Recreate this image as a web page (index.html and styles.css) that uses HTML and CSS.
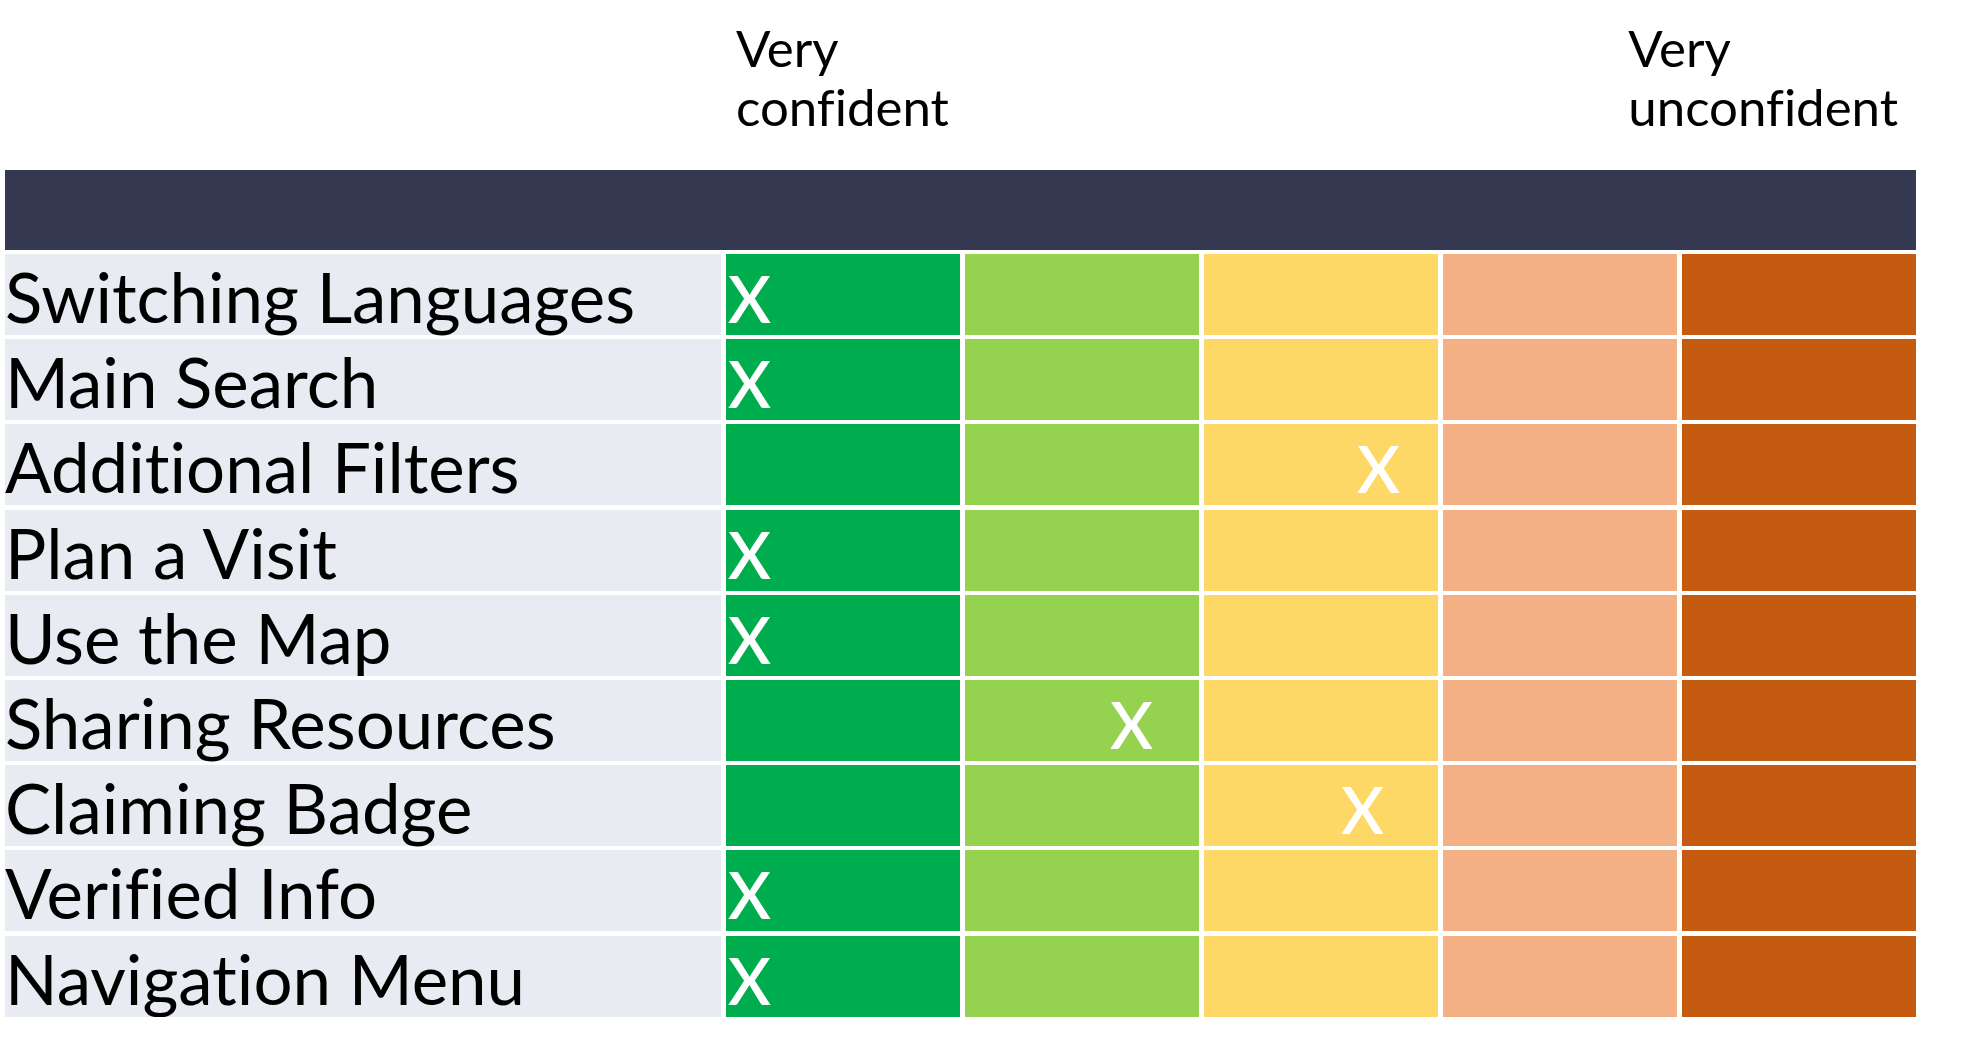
FILE: index.html
```html
<!DOCTYPE html>
<html lang="en">
<head>
<meta charset="utf-8">
<title>Confidence ratings</title>
<link rel="stylesheet" href="styles.css">
</head>
<body>
<div class="page">
  <div class="head">
    <div class="scale-label scale-start">Very<br>confident</div>
    <div class="scale-label scale-end">Very<br>unconfident</div>
  </div>
  <div class="bar"></div>
  <div class="grid">
    <div class="label">Switching Languages</div>
    <div class="cell c1"><span class="mark">X</span></div><div class="cell c2"></div><div class="cell c3"></div><div class="cell c4"></div><div class="cell c5"></div>

    <div class="label">Main Search</div>
    <div class="cell c1"><span class="mark">X</span></div><div class="cell c2"></div><div class="cell c3"></div><div class="cell c4"></div><div class="cell c5"></div>

    <div class="label">Additional Filters</div>
    <div class="cell c1"></div><div class="cell c2"></div><div class="cell c3"><span class="mark off-153">X</span></div><div class="cell c4"></div><div class="cell c5"></div>

    <div class="label">Plan a Visit</div>
    <div class="cell c1"><span class="mark">X</span></div><div class="cell c2"></div><div class="cell c3"></div><div class="cell c4"></div><div class="cell c5"></div>

    <div class="label">Use the Map</div>
    <div class="cell c1"><span class="mark">X</span></div><div class="cell c2"></div><div class="cell c3"></div><div class="cell c4"></div><div class="cell c5"></div>

    <div class="label">Sharing Resources</div>
    <div class="cell c1"></div><div class="cell c2"><span class="mark off-145">X</span></div><div class="cell c3"></div><div class="cell c4"></div><div class="cell c5"></div>

    <div class="label">Claiming Badge</div>
    <div class="cell c1"></div><div class="cell c2"></div><div class="cell c3"><span class="mark off-137">X</span></div><div class="cell c4"></div><div class="cell c5"></div>

    <div class="label">Verified Info</div>
    <div class="cell c1"><span class="mark">X</span></div><div class="cell c2"></div><div class="cell c3"></div><div class="cell c4"></div><div class="cell c5"></div>

    <div class="label">Navigation Menu</div>
    <div class="cell c1"><span class="mark">X</span></div><div class="cell c2"></div><div class="cell c3"></div><div class="cell c4"></div><div class="cell c5"></div>
  </div>
</div>
</body>
</html>
```
FILE: styles.css
```css
html, body {
  margin: 0;
  padding: 0;
  background: #ffffff;
}

.page {
  padding-left: 5px;
  font-family: Lato, "Liberation Sans", sans-serif;
  font-variant-ligatures: none;
  color: #000000;
}

.head {
  display: grid;
  grid-template-columns: 716px repeat(5, 234px);
  column-gap: 5px;
  height: 170px;
  box-sizing: border-box;
  padding-top: 18px;
}

.scale-label {
  font-size: 51px;
  line-height: 59px;
}

.scale-start {
  grid-column: 2 / 3;
  padding-left: 10px;
  white-space: nowrap;
}

.scale-end {
  grid-column: 4 / 7;
  justify-self: end;
  padding-right: 18px;
  white-space: nowrap;
}

.bar {
  width: 1911px;
  height: 80px;
  background: #343951;
  margin-bottom: 4px;
}

.grid {
  display: grid;
  grid-template-columns: 716px repeat(5, 234px);
  grid-auto-rows: 81px;
  column-gap: 5px;
  row-gap: 4.2px;
}

.label {
  background: #e8ebf2;
  font-size: 69px;
  line-height: 81px;
  padding-top: 2px;
  box-sizing: border-box;
  white-space: nowrap;
}

.cell {
  display: flex;
  align-items: center;
}

.c1 { background: #00ad4e; }
.c2 { background: #94d250; }
.c3 { background: #fed866; }
.c4 { background: #f4b085; }
.c5 { background: #c55a11; }

.mark {
  color: #ffffff;
  font-size: 65px;
  font-weight: 600;
  line-height: 1;
  padding-top: 8px;
  padding-left: 2px;
}

.off-153 { padding-left: 153px; }
.off-145 { padding-left: 145px; }
.off-137 { padding-left: 137px; }
```
